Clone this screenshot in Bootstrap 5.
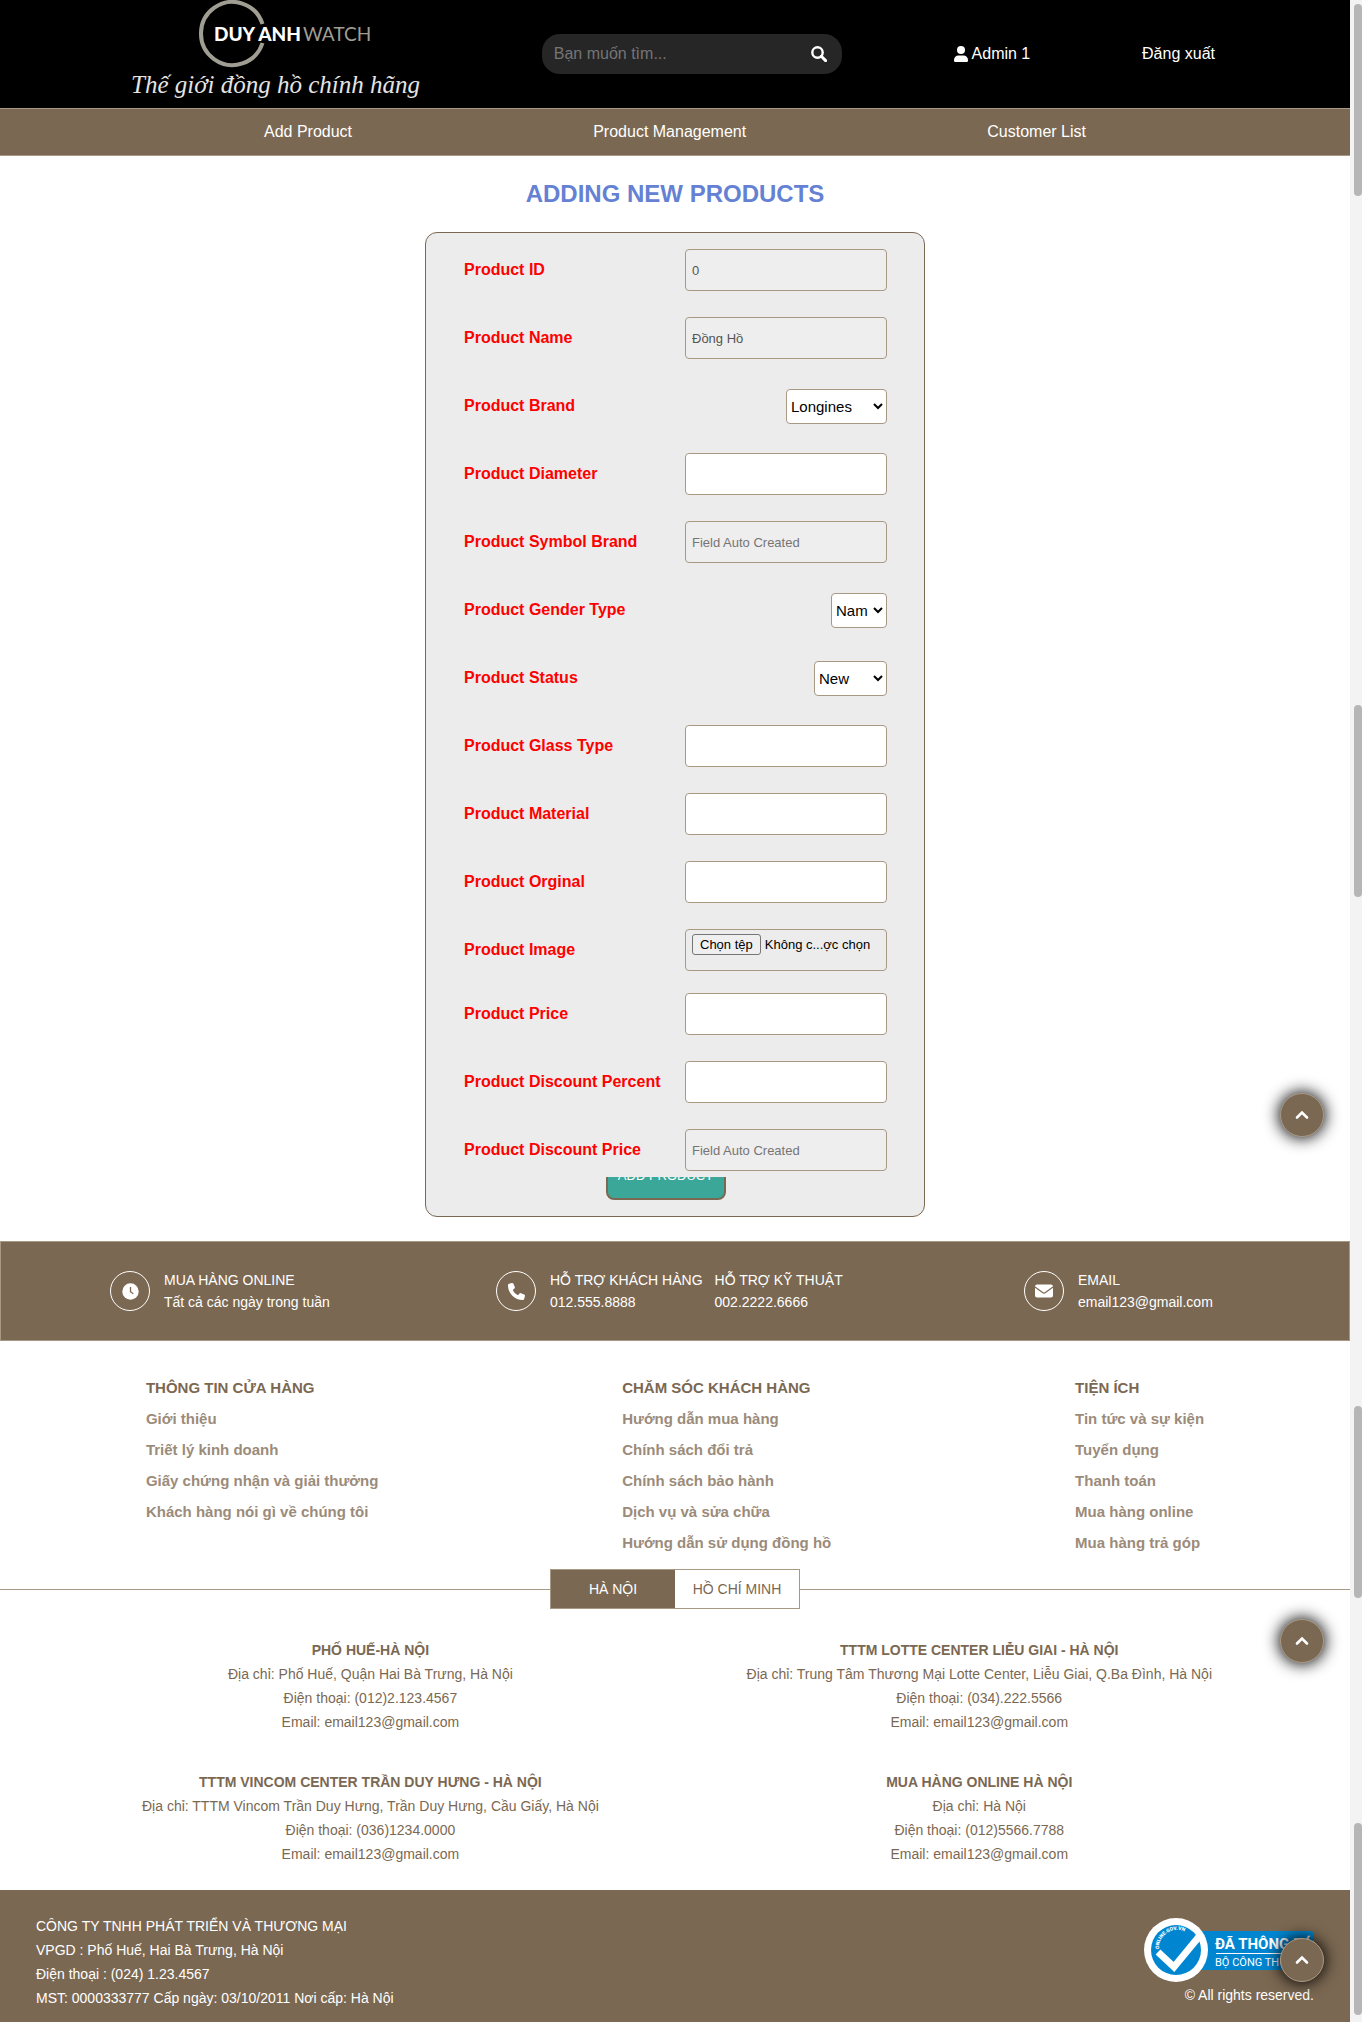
<!DOCTYPE html>
<html lang="vi">
<head>
<meta charset="utf-8">
<meta name="viewport" content="width=device-width, initial-scale=1">
<title>Duy Anh Watch - Add Product</title>
<link rel="stylesheet" href="https://cdn.jsdelivr.net/npm/bootstrap@5.3.0/dist/css/bootstrap.min.css">
<style>
:root { --brown: #7b6852; --brown-line: #a89985; --brown-soft: #9b8b7a; }
body { font-family: "Liberation Sans", Arial, sans-serif; font-size: 14px; line-height: 24px; color: var(--brown); background: #fff; }
a { color: inherit; text-decoration: none; }

.site-header { background: #000; height: 108px; padding: 0 135px 0 126px; color: #fff; font-size: 16px; }
.site-logo { width: 304px; height: 108px; }
.search-box { width: 300px; height: 40px; border-radius: 18px; background: #262626; padding: 0 12px; }
.search-box input { background: transparent; border: 0; outline: 0; color: #fff; font-size: 16px; padding: 0; }
.search-box input::placeholder { color: #757575; }
.search-box button { background: none; border: 0; padding: 0; width: 24px; height: 24px; line-height: 0; }

.menu-bar { background: var(--brown); border-top: 1px solid var(--brown-line); border-bottom: 1px solid var(--brown-line); height: 48px; padding: 0 264px; color: #fff; font-size: 16px; }

.page-title { color: #6481d3; font-size: 24px; font-weight: 700; line-height: 36px; margin: 0; padding: 20px 0; }
.product-form { width: 500px; background: #ececec; border: 1px solid var(--brown); border-radius: 12px; padding: 16px 37px 16px 38px; margin-bottom: 24px; }
.form-rows { position: relative; z-index: 1; background: #ececec; padding-bottom: 6px; }
.form-line { min-height: 42px; margin-bottom: 26px; }
.form-line.line-file { margin-bottom: 22px; }
.form-line:last-child { margin-bottom: 0; }
.form-line > label { color: #f00; font-size: 16px; font-weight: 700; line-height: 42px; align-self: flex-start; }
.field { width: 202px; height: 42px; border: 1px solid var(--brown-line); border-radius: 4px; background: #fff; font-size: 13px; padding: 0 6px; color: #545454; }
.field:disabled { background: #eee; }
.field::placeholder { color: #757575; }
.pick { height: 35px; border: 1px solid var(--brown-line); border-radius: 4px; background: #fff; color: #000; font-size: 15px; padding: 0; }
.pick-brand { width: 101px; }
.pick-gender { width: 56px; }
.pick-status { width: 73px; }
.field-file { background: transparent; padding: 4px 6px; line-height: 21px; color: #000; }
.file-btn { border: 1px solid #767676; border-radius: 3px; background: #efefef; padding: 0 7px; height: 21px; line-height: 19px; margin-right: 4px; }
.add-btn { width: 120px; height: 48px; margin: -25px 20px 0 0; border: 2px solid var(--brown); border-radius: 8px; background: #3aa799; color: #fff; font-size: 13px; padding: 0; white-space: nowrap; }

.contact-strip { background: var(--brown); border: 1px solid var(--brown-line); color: #fff; height: 100px; padding-left: 109px; display: grid; grid-template-columns: 386fr 528fr 325fr; align-items: center; line-height: 22px; }
.ring { width: 40px; height: 40px; border: 1px solid #fff; border-radius: 50%; margin-right: 14px; }

.link-cols { padding: 31px 24px 11px; font-size: 15px; font-weight: 700; line-height: 31px; }
.link-cols h2 { font-size: 15px; font-weight: 700; line-height: 31px; margin: 0; }
.link-cols li a { color: var(--brown-soft); }

.tab-line { flex: 1; height: 1px; background: var(--brown-line); }
.city-tabs { width: 250px; height: 40px; border: 1px solid var(--brown-line); }
.city-tabs button { flex: 1; border: 0; background: #fff; color: var(--brown); padding: 0; }
.city-tabs button.on { background: var(--brown); color: #fff; }

.stores { padding: 29px 138px 24px 142px; }
.store-col { row-gap: 36px; }
.stores h3 { font-size: 14px; font-weight: 700; line-height: 24px; margin: 0; }

.site-footer { background: var(--brown); color: #fff; padding: 24px 36px 12px; }
.badge-svg { width: 170px; height: 72px; }
.copy-line { line-height: 18px; }

.to-top { position: absolute; right: 26px; width: 44px; height: 44px; border-radius: 50%; border: 1px solid var(--brown-line); background: var(--brown); box-shadow: 0 0 16px 1px #000; padding: 0; line-height: 0; z-index: 2; }
.to-top.at-form { bottom: 104px; }
.to-top.at-stores { top: 10px; }
.to-top.at-footer { bottom: 40px; }

.scroll-rail { width: 12px; background: #f3f3f3; padding-top: 4px; }
.scroll-rail span { display: block; width: 8px; height: 192px; border-radius: 4px; background: #b6b6b6; }
.scroll-rail span + span { margin-top: 509px; }
.scroll-rail span:last-child { margin-top: 225px; }
</style>
<script src="https://cdn.jsdelivr.net/npm/bootstrap@5.3.0/dist/js/bootstrap.bundle.min.js"></script>
</head>
<body>
<div class="d-flex">
<div class="flex-grow-1">

<header class="site-header d-flex justify-content-between align-items-center">
  <a href="#" aria-label="Duy Anh Watch">
    <svg class="site-logo d-block" viewBox="0 0 304 108">
      <path d="M136.500 24A31.500 31.500 0 1 0 136.500 43" fill="none" stroke="#a09e93" stroke-width="4"/>
      <text x="88" y="41" font-family="Lato" font-weight="900" font-size="19" fill="#fff">DUY ANH</text>
      <text x="177" y="41" font-family="Lato" font-weight="400" font-size="19" fill="#a09e93">WATCH</text>
      <text x="5" y="93" font-family="Liberation Serif" font-style="italic" font-size="25" fill="#e4e4e4">Thế giới đồng hồ chính hãng</text>
    </svg>
  </a>
  <form class="search-box d-flex align-items-center">
    <input class="flex-grow-1 w-100" type="text" placeholder="Bạn muốn tìm..." aria-label="Bạn muốn tìm">
    <button type="button" aria-label="Tìm">
      <svg width="16" height="16" viewBox="0 0 16 16" fill="none" stroke="#fff"><circle cx="6.500" cy="6.500" r="5.200" stroke-width="2.400"/><path d="M10.300 10.300l4.300 4.300" stroke-width="3" stroke-linecap="round"/></svg>
    </button>
  </form>
  <a href="#" class="d-flex align-items-center gap-1">
    <svg width="14" height="16" viewBox="0 0 14 16" fill="#fff"><circle cx="7" cy="4" r="4"/><path d="M4.500 9.500h5A4.500 4.500 0 0 1 14 14v.800a1.200 1.200 0 0 1-1.200 1.200H1.200A1.200 1.200 0 0 1 0 14.800V14a4.500 4.500 0 0 1 4.500-4.500z"/></svg>
    Admin 1
  </a>
  <a href="#">Đăng xuất</a>
</header>

<nav class="menu-bar d-flex justify-content-between align-items-center">
  <a href="#">Add Product</a>
  <a href="#">Product Management</a>
  <a href="#">Customer List</a>
</nav>

<main class="position-relative d-flex flex-column align-items-center">
  <h1 class="page-title">ADDING NEW PRODUCTS</h1>
  <form class="product-form">
    <div class="form-rows">
      <div class="form-line d-flex justify-content-between align-items-center"><label for="pid">Product ID</label><input class="field" id="pid" type="text" value="0" disabled></div>
      <div class="form-line d-flex justify-content-between align-items-center"><label for="pname">Product Name</label><input class="field" id="pname" type="text" value="Đồng Hồ" disabled></div>
      <div class="form-line d-flex justify-content-between align-items-center"><label for="pbrand">Product Brand</label><select class="pick pick-brand" id="pbrand"><option>Longines</option></select></div>
      <div class="form-line d-flex justify-content-between align-items-center"><label for="pdia">Product Diameter</label><input class="field" id="pdia" type="text"></div>
      <div class="form-line d-flex justify-content-between align-items-center"><label for="psym">Product Symbol Brand</label><input class="field" id="psym" type="text" placeholder="Field Auto Created" disabled></div>
      <div class="form-line d-flex justify-content-between align-items-center"><label for="pgen">Product Gender Type</label><select class="pick pick-gender" id="pgen"><option>Nam</option></select></div>
      <div class="form-line d-flex justify-content-between align-items-center"><label for="pstat">Product Status</label><select class="pick pick-status" id="pstat"><option>New</option></select></div>
      <div class="form-line d-flex justify-content-between align-items-center"><label for="pglass">Product Glass Type</label><input class="field" id="pglass" type="text"></div>
      <div class="form-line d-flex justify-content-between align-items-center"><label for="pmat">Product Material</label><input class="field" id="pmat" type="text"></div>
      <div class="form-line d-flex justify-content-between align-items-center"><label for="porg">Product Orginal</label><input class="field" id="porg" type="text"></div>
      <div class="form-line line-file d-flex justify-content-between align-items-center"><label for="pimg">Product Image</label>
        <div class="field field-file d-flex align-items-start text-nowrap"><input class="visually-hidden" id="pimg" type="file"><label class="file-btn" for="pimg">Chọn tệp</label><span>Không c...ợc chọn</span></div>
      </div>
      <div class="form-line d-flex justify-content-between align-items-center"><label for="pprice">Product Price</label><input class="field" id="pprice" type="text"></div>
      <div class="form-line d-flex justify-content-between align-items-center"><label for="pdisc">Product Discount Percent</label><input class="field" id="pdisc" type="text"></div>
      <div class="form-line d-flex justify-content-between align-items-center"><label for="pdprice">Product Discount Price</label><input class="field" id="pdprice" type="text" placeholder="Field Auto Created" disabled></div>
    </div>
    <div class="d-flex justify-content-center"><button class="add-btn" type="button">ADD PRODUCT</button></div>
  </form>
  <button class="to-top at-form" type="button" aria-label="Lên đầu trang"><svg width="14" height="10" viewBox="0 0 14 10" fill="none" stroke="#fff" stroke-width="2.600" stroke-linecap="round"><path d="M2 7.500l5-5 5 5"/></svg></button>
</main>

<section class="contact-strip">
  <div class="d-flex align-items-center">
    <span class="ring d-flex align-items-center justify-content-center"><svg width="17" height="17" viewBox="0 0 17 17"><circle cx="8.500" cy="8.500" r="8.200" fill="#fff"/><path d="M8.500 4v4.700l2.800 2" fill="none" stroke="#7b6852" stroke-width="1.300"/></svg></span>
    <div>MUA HÀNG ONLINE<br>Tất cả các ngày trong tuần</div>
  </div>
  <div class="d-flex align-items-center">
    <span class="ring d-flex align-items-center justify-content-center"><svg width="17" height="17" viewBox="0 0 512 512" fill="#fff"><path d="M164.900 24.600c-7.700-18.600-28-28.500-47.400-23.200l-88 24C12.100 30.200 0 46 0 64c0 247.400 200.600 448 448 448 18 0 33.800-12.100 38.600-29.500l24-88c5.300-19.400-4.600-39.700-23.200-47.400l-96-40c-16.300-6.800-35.200-2.100-46.300 11.600L304.700 368C234.300 334.700 177.300 277.700 144 207.300L193.300 167c13.700-11.200 18.400-30 11.600-46.300l-40-96z"/></svg></span>
    <div class="d-flex gap-2"><div class="me-1">HỖ TRỢ KHÁCH HÀNG<br>012.555.8888</div><div>HỖ TRỢ KỸ THUẬT<br>002.2222.6666</div></div>
  </div>
  <div class="d-flex align-items-center">
    <span class="ring d-flex align-items-center justify-content-center"><svg width="18" height="14" viewBox="0 0 18 14"><rect width="18" height="13" y=".500" rx="2" fill="#fff"/><path d="M0 3l7.500 5.600q1.500 1 3 0L18 3" fill="none" stroke="#7b6852" stroke-width="1.200"/></svg></span>
    <div>EMAIL<br>email123@gmail.com</div>
  </div>
</section>

<section class="link-cols d-flex justify-content-around">
  <div><h2>THÔNG TIN CỬA HÀNG</h2>
    <ul class="list-unstyled m-0"><li><a href="#">Giới thiệu</a></li><li><a href="#">Triết lý kinh doanh</a></li><li><a href="#">Giấy chứng nhận và giải thưởng</a></li><li><a href="#">Khách hàng nói gì về chúng tôi</a></li></ul></div>
  <div><h2>CHĂM SÓC KHÁCH HÀNG</h2>
    <ul class="list-unstyled m-0"><li><a href="#">Hướng dẫn mua hàng</a></li><li><a href="#">Chính sách đổi trả</a></li><li><a href="#">Chính sách bảo hành</a></li><li><a href="#">Dịch vụ và sửa chữa</a></li><li><a href="#">Hướng dẫn sử dụng đồng hồ</a></li></ul></div>
  <div><h2>TIỆN ÍCH</h2>
    <ul class="list-unstyled m-0"><li><a href="#">Tin tức và sự kiện</a></li><li><a href="#">Tuyển dụng</a></li><li><a href="#">Thanh toán</a></li><li><a href="#">Mua hàng online</a></li><li><a href="#">Mua hàng trả góp</a></li></ul></div>
</section>

<div class="d-flex align-items-center">
  <div class="tab-line"></div>
  <div class="city-tabs d-flex"><button class="on" type="button">HÀ NỘI</button><button type="button">HỒ CHÍ MINH</button></div>
  <div class="tab-line"></div>
</div>

<section class="stores position-relative d-flex justify-content-between text-center">
  <div class="store-col d-flex flex-column">
    <div><h3>PHỐ HUẾ-HÀ NỘI</h3>Địa chỉ: Phố Huế, Quận Hai Bà Trưng, Hà Nội<br>Điện thoại: (012)2.123.4567<br>Email: email123@gmail.com</div>
    <div><h3>TTTM VINCOM CENTER TRẦN DUY HƯNG - HÀ NỘI</h3>Địa chỉ: TTTM Vincom Trần Duy Hưng, Trần Duy Hưng, Cầu Giấy, Hà Nội<br>Điện thoại: (036)1234.0000<br>Email: email123@gmail.com</div>
  </div>
  <div class="store-col d-flex flex-column">
    <div><h3>TTTM LOTTE CENTER LIỄU GIAI - HÀ NỘI</h3>Địa chỉ: Trung Tâm Thương Mại Lotte Center, Liễu Giai, Q.Ba Đình, Hà Nội<br>Điện thoại: (034).222.5566<br>Email: email123@gmail.com</div>
    <div><h3>MUA HÀNG ONLINE HÀ NỘI</h3>Địa chỉ: Hà Nội<br>Điện thoại: (012)5566.7788<br>Email: email123@gmail.com</div>
  </div>
  <button class="to-top at-stores" type="button" aria-label="Lên đầu trang"><svg width="14" height="10" viewBox="0 0 14 10" fill="none" stroke="#fff" stroke-width="2.600" stroke-linecap="round"><path d="M2 7.500l5-5 5 5"/></svg></button>
</section>

<footer class="site-footer position-relative d-flex justify-content-between">
  <div>CÔNG TY TNHH PHÁT TRIỂN VÀ THƯƠNG MẠI<br>VPGD : Phố Huế, Hai Bà Trưng, Hà Nội<br>Điện thoại : (024) 1.23.4567<br>MST: 0000333777 Cấp ngày: 03/10/2011 Nơi cấp: Hà Nội</div>
  <div class="d-flex flex-column align-items-end">
    <svg class="badge-svg" viewBox="0 0 170 72" role="img" aria-label="Đã thông báo Bộ Công Thương">
      <rect x="32" y="17" width="138" height="39" rx="4" fill="#0086d1"/>
      <circle cx="32" cy="36" r="32" fill="#fff"/><circle cx="32" cy="36" r="25" fill="#0086d1"/>
      <path d="M14 38l16 15 28-34" fill="none" stroke="#fff" stroke-width="7"/>
      <path id="arc" d="M15 35A18 18 0 0 1 48 24" fill="none"/>
      <text font-family="Roboto" font-size="5" font-weight="900" fill="#fff"><textPath href="#arc">ONLINE.GOV.VN</textPath></text>
      <text x="71" y="35" font-family="Liberation Sans Narrow, Roboto" font-size="15" font-weight="700" fill="#fff">ĐÃ THÔNG BÁO</text>
      <rect x="72" y="39" width="92" height="1" fill="#fff"/>
      <text x="71" y="52" font-family="Roboto" font-size="11" fill="#fff">BỘ CÔNG THƯƠNG</text>
    </svg>
    <div class="copy-line">© All rights reserved.</div>
  </div>
  <button class="to-top at-footer" type="button" aria-label="Lên đầu trang"><svg width="14" height="10" viewBox="0 0 14 10" fill="none" stroke="#fff" stroke-width="2.600" stroke-linecap="round"><path d="M2 7.500l5-5 5 5"/></svg></button>
</footer>

</div>
<div class="scroll-rail flex-shrink-0 d-flex flex-column align-items-end" aria-hidden="true"><span></span><span></span><span></span><span></span></div>
</div>
</body>
</html>
